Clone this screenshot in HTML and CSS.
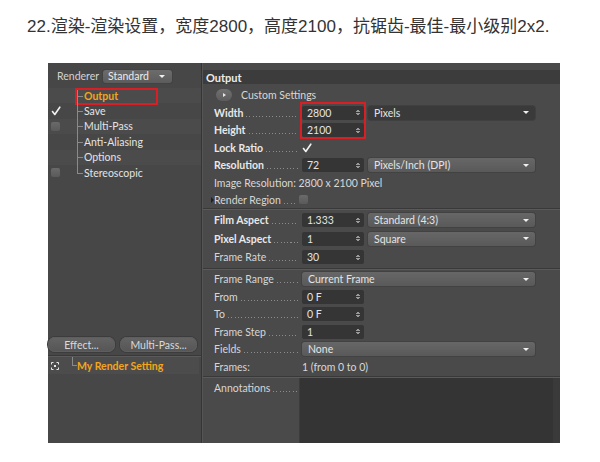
FILE: index.html
```html
<!DOCTYPE html>
<html>
<head>
<meta charset="utf-8">
<link rel="stylesheet" href="styles.css">
</head>
<body>
<div class="title">22.渲染-渲染设置，宽度2800，高度2100，抗锯齿-最佳-最小级别2x2.</div>
<div class="app">
  <div class="side">
    <div class="renderer">
      <span class="rlabel">Renderer</span>
      <div class="dd dd-std">Standard<i class="arrow"></i></div>
    </div>
    <div class="tree">
      <div class="trow band sel"><span class="cbslot"></span><span class="branch"></span><span class="tlabel orange">Output</span><span class="redbox-out"></span></div>
      <div class="trow"><span class="cbslot"><svg class="check" viewBox="0 0 10 10" width="10" height="10"><path d="M1.5 5.5 L3.8 8.5 L8.8 1.2" fill="none" stroke="#f2f2f2" stroke-width="1.6" stroke-linecap="round" stroke-linejoin="round"/></svg></span><span class="branch"></span><span class="tlabel">Save</span></div>
      <div class="trow band"><span class="cbslot"><span class="cb"></span></span><span class="branch"></span><span class="tlabel">Multi-Pass</span></div>
      <div class="trow"><span class="cbslot"></span><span class="branch"></span><span class="tlabel">Anti-Aliasing</span></div>
      <div class="trow band"><span class="cbslot"></span><span class="branch"></span><span class="tlabel">Options</span></div>
      <div class="trow last"><span class="cbslot"><span class="cb"></span></span><span class="branch"></span><span class="tlabel">Stereoscopic</span></div>
    </div>
    <div class="spacer"></div>
    <div class="btns">
      <div class="btn btn-eff">Effect...</div>
      <div class="btn btn-mp">Multi-Pass...</div>
    </div>
    <div class="sep"></div>
    <div class="setrow">
      <svg class="seticon" viewBox="0 0 8 8" width="8" height="8">
        <path d="M0.5 2.5 V0.5 H2.5 M5.5 0.5 H7.5 V2.5 M7.5 5.5 V7.5 H5.5 M2.5 7.5 H0.5 V5.5" fill="none" stroke="#e8e8e8" stroke-width="1"/>
        <rect x="3" y="3" width="2" height="2" fill="#e8e8e8"/>
      </svg>
      <span class="setbranch"></span>
      <span class="tlabel orange">My Render Setting</span>
    </div>
    <div class="sidebottom"></div>
  </div>

  <div class="main">
    <div class="htop"></div>
    <div class="hband">Output</div>

    <div class="section s1">
      <div class="row r-custom">
        <span class="cbtn"><i class="tri"></i></span>
        <span class="plain">Custom Settings</span>
      </div>
      <div class="row">
        <div class="lbl b"><span>Width</span><span class="dots"></span></div>
        <div class="num">2800<i class="spin"></i></div>
        <div class="dd dd-dark">Pixels<i class="arrow"></i></div>
      </div>
      <div class="row">
        <div class="lbl b"><span>Height</span><span class="dots"></span></div>
        <div class="num">2100<i class="spin"></i></div>
      </div>
      <div class="row">
        <div class="lbl b"><span>Lock Ratio</span><span class="dots"></span></div>
        <svg class="check" viewBox="0 0 10 10" width="10" height="10"><path d="M1.5 5.5 L3.8 8.5 L8.8 1.2" fill="none" stroke="#f2f2f2" stroke-width="1.6" stroke-linecap="round" stroke-linejoin="round"/></svg>
      </div>
      <div class="row">
        <div class="lbl b"><span>Resolution</span><span class="dots"></span></div>
        <div class="num">72<i class="spin"></i></div>
        <div class="dd">Pixels/Inch (DPI)<i class="arrow"></i></div>
      </div>
      <div class="row">
        <span class="plain">Image Resolution: 2800 x 2100 Pixel</span>
      </div>
      <div class="row r-region">
        <i class="rtri"></i>
        <div class="lbl lbl-r"><span>Render Region</span><span class="dots"></span></div>
        <span class="cb cb-r"></span>
      </div>
    </div>
    <div class="sep"></div>

    <div class="section s2">
      <div class="row">
        <div class="lbl b"><span>Film Aspect</span><span class="dots"></span></div>
        <div class="num">1.333<i class="spin"></i></div>
        <div class="dd">Standard (4:3)<i class="arrow"></i></div>
      </div>
      <div class="row">
        <div class="lbl b"><span>Pixel Aspect</span><span class="dots"></span></div>
        <div class="num">1<i class="spin"></i></div>
        <div class="dd">Square<i class="arrow"></i></div>
      </div>
      <div class="row">
        <div class="lbl"><span>Frame Rate</span><span class="dots"></span></div>
        <div class="num">30<i class="spin"></i></div>
      </div>
    </div>
    <div class="sep"></div>

    <div class="section s3">
      <div class="row">
        <div class="lbl"><span>Frame Range</span><span class="dots"></span></div>
        <div class="dd dd-wide">Current Frame<i class="arrow"></i></div>
      </div>
      <div class="row">
        <div class="lbl"><span>From</span><span class="dots"></span></div>
        <div class="num">0 F<i class="spin"></i></div>
      </div>
      <div class="row">
        <div class="lbl"><span>To</span><span class="dots"></span></div>
        <div class="num">0 F<i class="spin"></i></div>
      </div>
      <div class="row">
        <div class="lbl"><span>Frame Step</span><span class="dots"></span></div>
        <div class="num">1<i class="spin"></i></div>
      </div>
      <div class="row">
        <div class="lbl"><span>Fields</span><span class="dots"></span></div>
        <div class="dd dd-wide">None<i class="arrow"></i></div>
      </div>
      <div class="row">
        <div class="lbl"><span>Frames:</span></div>
        <span class="plain val">1 (from 0 to 0)</span>
      </div>
    </div>
    <div class="sep"></div>

    <div class="annot">
      <div class="alabel"><div class="lbl"><span>Annotations</span><span class="dots"></span></div></div>
      <div class="afield"></div>
      <div class="astrip"></div>
    </div>

    <div class="redbox-wh"></div>
  </div>
</div>
</body>
</html>
```

FILE: styles.css
```css
html, body {
  margin: 0;
  padding: 0;
  background: #ffffff;
}

.title {
  height: 63px;
  box-sizing: border-box;
  padding: 17px 0 0 27px;
  font-family: "Liberation Sans", "Noto Sans CJK SC", sans-serif;
  font-size: 17px;
  line-height: 20px;
  color: #333333;
  white-space: nowrap;
}

.app {
  display: flex;
  width: 512px;
  height: 380px;
  margin-left: 48px;
  font-family: "Lato", "DejaVu Sans", sans-serif;
  font-size: 10.5px;
  color: #d6d6d6;
}

/* ---------- side panel ---------- */
.side {
  width: 153px;
  background: #474747;
  border-right: 1px solid #353535;
  display: flex;
  flex-direction: column;
}

.renderer {
  height: 25px;
  display: flex;
  align-items: center;
  padding-left: 9px;
  box-sizing: border-box;
  padding-top: 1px;
}

.rlabel {
  color: #d2d2d2;
  margin-right: 4px;
}

.tree {
  display: flex;
  flex-direction: column;
}

.trow {
  height: 15.4px;
  display: flex;
  align-items: center;
  position: relative;
}

.trow.band {
  background: #4b4b4b;
}

.cbslot {
  width: 27px;
  height: 100%;
  display: flex;
  align-items: center;
  padding-left: 3px;
  box-sizing: border-box;
}

.cb {
  display: block;
  width: 9px;
  height: 9px;
  border-radius: 2px;
  background: linear-gradient(#6a6a6a, #5a5a5a);
}

.check {
  display: block;
}

.branch {
  width: 7px;
  height: 100%;
  position: relative;
  margin-left: 2px;
}

.branch::before {
  content: "";
  position: absolute;
  left: 0;
  top: 0;
  bottom: 0;
  border-left: 1px solid #8a8a8a;
}

.branch::after {
  content: "";
  position: absolute;
  left: 0;
  top: 50%;
  width: 6px;
  border-top: 1px solid #8a8a8a;
}

.trow.last .branch::before {
  bottom: 50%;
}

.tlabel {
  color: #e4e4e4;
}

.orange {
  color: #f4a51c;
  font-weight: bold;
}

.redbox-out {
  position: absolute;
  left: 27px;
  top: 0;
  width: 83px;
  height: 17px;
  box-sizing: border-box;
  border: 2px solid #d81f26;
}

.spacer {
  flex: 1;
}

.btns {
  display: flex;
  gap: 5px;
  height: 15px;
  margin-bottom: 3px;
}

.btn {
  height: 15px;
  border-radius: 7px;
  background: linear-gradient(#646464, #555555);
  box-shadow: inset 0 0 0 1px #5e5e5e, 0 0 0 1px #3c3c3c;
  color: #dadada;
  display: flex;
  align-items: center;
  justify-content: center;
}

.btn-eff {
  width: 67px;
}

.btn-mp {
  width: 77px;
}

.sep {
  height: 1px;
  border-top: 1px solid #393939;
  background: #5a5a5a;
}

.setrow {
  height: 17px;
  display: flex;
  align-items: center;
  background: #4c4c4c;
  margin-right: 2px;
}

.seticon {
  margin-left: 3px;
  display: block;
}

.setbranch {
  width: 5px;
  margin-left: 13px;
  align-self: flex-start;
  height: 9px;
  border-left: 1px solid #8a8a8a;
  border-bottom: 1px solid #8a8a8a;
  box-sizing: border-box;
}

.sidebottom {
  height: 69px;
}

/* ---------- main panel ---------- */
.main {
  flex: 1;
  background: #4a4a4a;
  border-left: 1px solid #555555;
  display: flex;
  flex-direction: column;
  position: relative;
}

.htop {
  height: 7px;
}

.hband {
  height: 14px;
  background: #3c3c3c;
  color: #ececec;
  font-weight: bold;
  font-size: 11px;
  display: flex;
  align-items: center;
  padding-left: 3px;
}

.section {
  display: flex;
  flex-direction: column;
}

.s1 {
  padding-top: 2px;
}

.s1 .row {
  height: 17.5px;
}

.s1 .r-custom {
  height: 18px;
}

.s1 .r-region {
  height: 16.5px;
}

.s2 {
  padding: 1px 0 1px;
}

.s2 .row {
  height: 18.5px;
}

.s3 {
  padding-top: 1px;
}

.s3 .row {
  height: 17.5px;
}

.row {
  display: flex;
  align-items: center;
  padding-left: 11px;
}

.lbl {
  width: 84px;
  margin-right: 4px;
  display: flex;
  align-items: baseline;
  white-space: nowrap;
  color: #d6d6d6;
}

.lbl.b {
  color: #e8e8e8;
  font-weight: bold;
}

.dots {
  flex: 1;
  height: 1px;
  margin-left: 3px;
  background-image: repeating-linear-gradient(90deg, #8c8c8c 0 1px, transparent 1px 3.3px);
}

.plain {
  color: #d8d8d8;
  white-space: nowrap;
}

.r-custom {
  padding-left: 13px;
}

.cbtn {
  width: 16px;
  height: 12px;
  border-radius: 6px;
  background: linear-gradient(#707070, #5c5c5c);
  display: flex;
  align-items: center;
  justify-content: center;
  margin-right: 9px;
}

.tri {
  width: 0;
  height: 0;
  border-left: 3px solid #e6e6e6;
  border-top: 2.5px solid transparent;
  border-bottom: 2.5px solid transparent;
}

.r-region {
  padding-left: 8px;
}

.rtri {
  width: 0;
  height: 0;
  border-left: 3px solid #202020;
  border-top: 3px solid transparent;
  border-bottom: 3px solid transparent;
}

.lbl-r {
  width: 81px;
  margin-right: 4px;
}

.num {
  width: 62px;
  height: 14px;
  box-sizing: border-box;
  background: #353535;
  border-radius: 2px;
  padding: 0 4px 0 5px;
  display: flex;
  align-items: center;
  justify-content: space-between;
  color: #e4e4e4;
  margin-right: 4px;
}

.spin {
  width: 4px;
  height: 7px;
  background:
    linear-gradient(to bottom right, transparent 50%, #9a9a9a 50%) 0 0 / 2px 3px no-repeat,
    linear-gradient(to bottom left, transparent 50%, #9a9a9a 50%) 2px 0 / 2px 3px no-repeat,
    linear-gradient(to top right, transparent 50%, #9a9a9a 50%) 0 4px / 2px 3px no-repeat,
    linear-gradient(to top left, transparent 50%, #9a9a9a 50%) 2px 4px / 2px 3px no-repeat;
}

.dd {
  width: 167px;
  height: 14px;
  box-sizing: border-box;
  border-radius: 3px;
  background: linear-gradient(#676767, #595959);
  box-shadow: 0 0 0 1px #424242;
  padding: 0 6px 0 6px;
  display: flex;
  align-items: center;
  justify-content: space-between;
  color: #e4e4e4;
  white-space: nowrap;
}

.dd-dark {
  background: #3a3a3a;
  box-shadow: 0 0 0 1px #404040;
}

.dd-wide {
  width: 233px;
}

.dd-std {
  width: 69px;
  height: 13px;
  background: linear-gradient(#6c6c6c, #5c5c5c);
  color: #ececec;
  padding: 0 7px 0 5px;
}

.arrow {
  width: 0;
  height: 0;
  border-top: 3px solid #f0f0f0;
  border-left: 3.5px solid transparent;
  border-right: 3.5px solid transparent;
}

.annot {
  flex: 1;
  display: flex;
}

.alabel {
  width: 97px;
  padding: 2px 0 0 11px;
  box-sizing: border-box;
  border-right: 1px solid #3c3c3c;
}

.alabel .lbl {
  width: 84px;
  height: 17.5px;
  align-items: center;
}

.alabel .dots {
  align-self: flex-end;
  margin-bottom: 5px;
}

.afield {
  flex: 1;
  background: #343434;
}

.astrip {
  width: 7px;
  background: #3a3a3a;
}

.redbox-wh {
  position: absolute;
  left: 97px;
  top: 39px;
  width: 66px;
  height: 37px;
  box-sizing: border-box;
  border: 2px solid #d81f26;
}
```
